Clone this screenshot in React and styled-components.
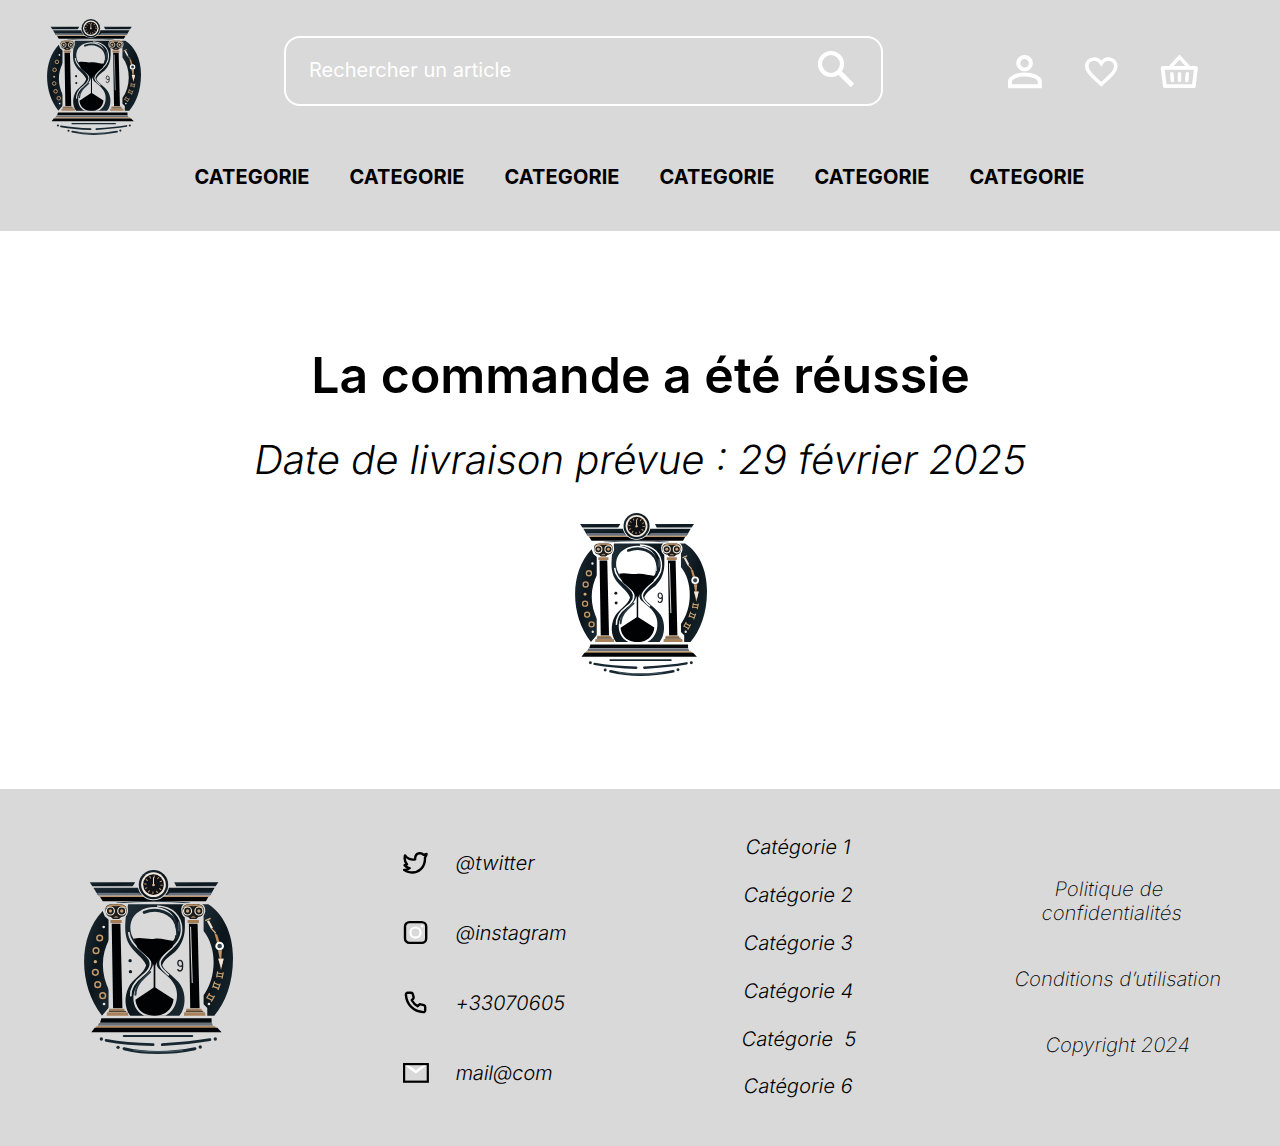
import React from 'react';
import styled, { createGlobalStyle } from 'styled-components';

const GlobalStyle = createGlobalStyle`
  *, *::before, *::after { box-sizing: border-box; }
  body { margin: 0; background: #fff; color: #000; font-family: Inter, 'Liberation Sans', sans-serif; font-optical-sizing: none; }
  h1, p { margin: 0; }
`;

const Page = styled.div`
  min-height: 1146px;
  display: flex;
  flex-direction: column;
`;

const Header = styled.header`
  height: 231px;
  background: #d9d9d9;
`;

const TopBar = styled.div`
  display: flex;
  align-items: flex-start;
  padding: 19px 81px 0 47px;
  height: 136px;
`;

const LogoSvg = styled.svg`
  display: block;
  flex: none;
  width: ${(p) => p.$width}px;
  height: ${(p) => p.$height}px;
`;

const SearchBox = styled.label`
  display: flex;
  align-items: center;
  width: 599px;
  height: 70px;
  margin: 17px 0 0 143px;
  padding: 0 21px 2px 23px;
  border: 2px solid #fff;
  border-radius: 16px;
`;

const SearchInput = styled.input`
  flex: 1;
  min-width: 0;
  padding: 0;
  border: 0;
  outline: 0;
  background: transparent;
  font: 400 20px/24px Inter, 'Liberation Sans', sans-serif;
  color: #fff;
  &::placeholder { color: #fff; opacity: 1; }
`;

const Icon = styled.svg`
  display: block;
  flex: none;
  width: ${(p) => p.$size}px;
  height: ${(p) => p.$size}px;
  fill: none;
`;

const Actions = styled.div`
  display: flex;
  align-items: center;
  gap: 37px;
  margin: 32px 0 0 auto;
`;

const Nav = styled.nav`
  display: flex;
  justify-content: center;
  gap: 40px;
  padding-top: 29px;
`;

const NavLink = styled.a`
  width: 115px;
  font-size: 20px;
  line-height: 24px;
  font-weight: 700;
  letter-spacing: 0.1px;
  text-indent: -0.5px;
  white-space: nowrap;
`;

const Main = styled.main`
  height: 558px;
  display: flex;
  flex-direction: column;
  align-items: center;
  padding: 114px 0 0 1px;
`;

const Title = styled.h1`
  font-size: 50px;
  line-height: 61px;
  font-weight: 600;
  white-space: nowrap;
`;

const Slanted = styled.span`
  display: block;
  font-style: normal;
  letter-spacing: ${(p) => p.$tracking || 0}px;
  white-space: pre;
  transform: translateX(-0.065em) skewX(-9.4deg);
  transform-origin: 0 80%;
`;

const Delivery = styled.p`
  margin: 29px 0 28px;
  font-size: 40px;
  line-height: 50px;
  font-weight: 300;
`;

const Footer = styled.footer`
  height: 357px;
  background: #d9d9d9;
  display: grid;
  grid-template-columns: 403px 256px 280px 341px;
  font-size: 20px;
  line-height: 24px;
  font-weight: 300;
`;

const FooterBrand = styled.div`
  padding: 81px 0 0 84px;
`;

const List = styled.ul`
  display: flex;
  flex-direction: column;
  align-items: ${(p) => p.$align};
  gap: ${(p) => p.$gap}px;
  margin: 0;
  padding: ${(p) => p.$top}px 0 0;
  list-style: none;
`;

const Contact = styled.li`
  display: flex;
  align-items: center;
  gap: 27px;
  height: 26px;
`;

const Legal = styled.div`
  display: flex;
  flex-direction: column;
  align-items: center;
  gap: 42px;
  padding: 88px 0 0 17px;
  font-weight: 200;
`;

const Policy = styled.p`
  display: flex;
  flex-direction: column;
  align-items: center;
  margin-right: 12px;
`;

const Logo = ({ width, height, bg, id }) => (
  <LogoSvg $width={width} $height={height} viewBox="28 29 446 552" preserveAspectRatio="none">
    <defs>
      <linearGradient id={id} x1="0" y1="0" x2="1" y2="1">
        <stop offset="0" stopColor="#202f39" />
        <stop offset=".5" stopColor="#0b151b" />
        <stop offset="1" stopColor="#1b2932" />
      </linearGradient>
    </defs>
    <g fill={`url(#${id})`}>
      <path d="M84 152C10 228 10 374 82 466L96 450L104 440V392C78 340 78 285 104 236V180L90 168Z" />
      <path d="M372 132H400C444 160 474 218 474 293C474 370 451 427 418 466H397V443L386 432V405C426 350 426 262 386 212V168Z" />
      <path d="M160 132H326C330 150 330 180 330 200C330 230 320 255 300 275C285 287 268 297 262 315C270 335 300 348 317 374C334 400 333 443 314 466H166C148 440 149 407 161 382C174 354 206 344 214 315C204 290 178 278 163 252C148 225 151 195 153 170Z" />
      <path d="M45 66H181L174 78H53Z" />
      <path d="M298 66H430L422 78H304Z" />
      <path d="M56 82H419L406 105H70Z" />
    </g>
    <path d="M66 97H192L200 105H71ZM285 97H410L406 105H275Z" fill="#69717f" />
    <path d="M72 106H405L402 110H75Z" fill="#bd986e" />
    <path d="M76 110H400L393 123H84Z" fill="#020305" />
    <path d="M125 128Q240 118 345 128" stroke="#304049" strokeWidth="3" fill="none" />

    <circle cx="236" cy="73" r="47" fill={bg} />
    <circle cx="236" cy="73" r="44" fill={`url(#${id})`} />
    <circle cx="236" cy="73" r="37" fill="#f3e8dc" />
    <circle cx="236" cy="73" r="31" fill="#101114" />
    <circle cx="236" cy="73" r="24" fill="none" stroke="#c8a077" strokeWidth="7" strokeDasharray="3 9.57" />
    <path d="M236 51V74" stroke="#f5dec4" strokeWidth="3" />
    <circle cx="236" cy="74" r="4" fill="#d9b891" />

    <path d="M240 140C279 140 306 168 306 203C306 217 302 230 298 237C288 254 258 275 248 300C243 310 246 319 253 326L275 345C298 365 309 385 306 413C304 441 286 459 272 466H208C185 455 174 433 176 407C179 371 212 350 229 326C237 316 236 303 230 294C217 274 187 254 175 233C166 217 165 200 169 185C177 158 205 140 240 140Z" fill={bg} />
    <path d="M247 137C292 139 321 167 320 209C319 251 279 268 260 296C248 314 261 327 282 345M162 215C165 255 203 267 222 295C234 314 222 332 202 347C180 364 166 383 168 408" fill="none" stroke={bg} strokeWidth="5" />
    <path d="M208 156C252 139 292 160 303 190C307 203 307 216 305 230" fill="none" stroke="#17252e" strokeWidth="9" strokeLinecap="round" />
    <path d="M290 181Q303 201 302 225" fill="none" stroke={bg} strokeWidth="4" />
    <path d="M312 184V213" stroke="#627583" strokeWidth="3" />
    <path d="M177 235C198 229 218 238 240 235C259 233 275 240 297 242L293 260C275 276 251 291 239 320C229 291 200 277 188 262Z" fill="#010203" />
    <path d="M239 300V385" stroke="#05080b" strokeWidth="5" />
    <path d="M239 380L296 417C294 441 278 459 257 464Q239 468 222 464C200 460 184 442 182 418Z" fill="#010203" />
    <path d="M182 403C183 373 201 358 226 335" fill="none" stroke="#263842" strokeWidth="6" strokeLinecap="round" />
    <path d="M252 329Q269 350 286 359" fill="none" stroke={bg} strokeWidth="5" />

    {[124, 355].map((cx) => (
      <g key={cx}>
        <path d={`M${cx - 19} 178H${cx + 19}V445L${cx + 36} 466H${cx - 36}L${cx - 19} 445Z`} fill={bg} stroke={bg} strokeWidth="7" />
        <path d={`M${cx - 34} 146Q${cx - 33} 130 ${cx - 12} 130H${cx + 16}Q${cx + 35} 132 ${cx + 34} 153Q${cx + 31} 171 ${cx + 16} 172L${cx + 10} 178H${cx - 10}L${cx - 16} 172Q${cx - 34} 170 ${cx - 34} 146Z`} fill="#1b1c1b" stroke={bg} strokeWidth="4" />
        <path d={`M${cx - 29} 143Q${cx - 18} 132 ${cx} 135Q${cx + 18} 132 ${cx + 29} 143`} fill="none" stroke="#b58d61" strokeWidth="5" />
        {[-17, 17].map((d) => (
          <g key={d}>
            <circle cx={cx + d} cy="152" r="12" fill="#171c1e" stroke="#f3e8da" strokeWidth="3.5" />
            <circle cx={cx + d} cy="152" r="5" fill="#d0a26f" />
          </g>
        ))}
        <path d={`M${cx - 8} 172Q${cx} 162 ${cx + 8} 172Z`} fill="#a57c54" />
        <path d={`M${cx - 17} 179H${cx + 17}V188H${cx - 17}Z`} fill="#a57c54" />
        <path d={`M${cx - 13} 190H${cx + 13}L${cx + 19} 444H${cx - 9}Z`} fill="#010203" />
        <path d={`M${cx - 21} 445H${cx + 25}V452H${cx - 21}ZM${cx - 27} 456H${cx + 35}L${cx + 37} 466H${cx - 28}Z`} fill="#a9825b" />
        <path d={`M${cx - 22} 453H${cx + 30}`} stroke="#302c27" strokeWidth="3" />
      </g>
    ))}
    <path d="M347 199L352 368" stroke={bg} strokeWidth="3" />

    <g fill="none" stroke="#c69a69" strokeWidth="4.5">
      {[[75, 233], [64, 271], [62, 336], [69, 373], [84, 406]].map(([x, y]) => <circle key={y} cx={x} cy={y} r="8.5" />)}
    </g>
    <circle cx="62" cy="304" r="5" fill="#d2a472" />
    {[[87, 200], [88, 431], [402, 431]].map(([x, y]) => <circle key={`${x}-${y}`} cx={x} cy={y} r="4" fill="#e5e4e2" />)}

    <path d="M399 181L411 204" stroke="#eee2d4" strokeWidth="7" />
    <path d="M391 181L407 174M409 204L422 218" stroke="#d7b58e" strokeWidth="4" />
    <path d="M418 217L427 223L435 250H427Z" fill="#c08a5a" />
    <path d="M429 270H441L439 294H446L438 330L430 294H434Z" fill="#c0946a" />
    <path d="M430 296H446L439 323Z" fill="#f0e5d9" />
    <circle cx="434" cy="257" r="10" fill="#35434b" stroke="#fff" strokeWidth="6" />
    <g stroke="#cda574" strokeWidth="3.5" fill="none">
      <path d="M428 338L444 341M426 347L442 350M428 333L425 351M445 336L441 355" />
      <path d="M418 368L434 375M414 378L430 384M419 363L413 382M436 370L429 389" />
      <path d="M402 403L416 411M397 412L411 420M404 398L395 414M419 406L409 424" />
    </g>

    <circle cx="166" cy="301" r="5" fill="#141b20" />
    <circle cx="167" cy="334" r="5" fill="#141b20" />
    <path d="M323 314Q319 320 313 317Q308 314 309 307Q310 299 316 300Q322 301 323 309V320Q323 331 315 332Q309 332 309 326" fill="none" stroke="#171c20" strokeWidth="4" />

    <path d="M72 470H413L415 493H72Z" fill={bg} />
    <path d="M80 474H410V487H76Z" fill="#05090c" />
    <path d="M73 488H411L414 496H69Z" fill="#6b717a" />
    <path d="M66 497H419L424 503H62Z" fill="#b38c61" />
    <path d="M60 502H427L440 516H50Z" fill="#020507" />

    <g fill="none" stroke="#172832" strokeWidth="6" strokeLinecap="round">
      <path d="M147 527H352" />
      <path d="M94 540Q155 551 235 553M262 553Q345 548 405 538" strokeWidth="8" />
      <path d="M148 565Q244 588 360 565" strokeWidth="9" />
    </g>
    <path d="M175 569Q244 580 324 570" stroke="#667883" strokeWidth="2" fill="none" />
    {[[80, 536], [421, 536], [130, 561], [376, 560]].map(([x, y]) => <circle key={x} cx={x} cy={y} r="5" fill="#1d2a32" />)}
  </LogoSvg>
);

const SearchIcon = () => (
  <Icon $size={46} viewBox="0 0 46 46" stroke="#fff">
    <circle cx="17" cy="17" r="11" strokeWidth="4.2" />
    <path d="M25 25L38.5 38.5" strokeWidth="5" />
  </Icon>
);

const UserIcon = () => (
  <Icon $size={40} viewBox="0 0 40 40" stroke="#fff" strokeWidth="4">
    <circle cx="19.6" cy="12.2" r="6.3" />
    <path d="M5 35.3V30.8C5 25.7 13.2 23.6 20 23.6S34.8 25.7 34.8 30.8V35.3Z" />
  </Icon>
);

const HeartIcon = () => (
  <Icon $size={40} viewBox="0 0 40 40" stroke="#fff" strokeWidth="3.6">
    <path d="M19.3 33.3L16.8 31C8.7 23.6 4.8 20 4.8 15.2C4.8 11 8 8 12 8C14.7 8 17.6 9.6 19.3 12.4C21 9.6 23.9 8 26.6 8C30.6 8 33.8 11 33.8 15.2C33.8 20 29.9 23.6 21.8 31Z" />
  </Icon>
);

const BasketIcon = () => (
  <Icon $size={40} viewBox="0 0 40 40" stroke="#fff" strokeWidth="3.8" strokeLinejoin="round" strokeLinecap="round">
    <path d="M3.6 16.8H37L34.8 35.2H5.9Z" />
    <path d="M12.3 15L20.5 6L28.8 15" strokeLinejoin="miter" strokeWidth="3.4" />
    <path d="M12.9 22.8L13.4 29.6M20.5 22.8V29.6M28.3 22.8L27.7 29.6" strokeWidth="3.5" />
  </Icon>
);

const contacts = [
  ['@twitter', 0.32, <path key="i" d="M2.2 4.8C4 8 8.5 9.6 12.3 8.8C12.2 5 13.5 2.8 16.8 2.6C18.8 2.5 20 3.3 20.8 4.3L23.8 3.3C23.6 5.2 23 6 22.2 7C22.6 17 15.5 22.8 7.5 21.8C5 21.5 3 20.8 1.2 19.3C3.5 19.6 5.3 18.8 6.8 17.5C4.8 17.2 3 16.3 1.8 14.6L4.2 13.8C2 11.5 1.5 8 2.2 4.8Z" transform="translate(-.2 .6)" strokeWidth="2.4" strokeLinejoin="round" />],
  ['@instagram', 0, <React.Fragment key="i"><rect x="2" y="2.1" width="21.2" height="20.8" rx="4.5" strokeWidth="2.4" /><g stroke="#fff"><circle cx="12.5" cy="12.6" r="5.1" strokeWidth="2.2" /><path d="M18 6.2H20.2" strokeWidth="2.2" /></g></React.Fragment>],
  ['+33070605', 0.12, <path key="i" d="M4.2 2.8H7.7C8.5 2.8 9.1 3.3 9.3 4.1L10.1 7.1C10.3 7.8 10.1 8.4 9.6 8.9L8.3 10.2C9.7 12.8 11.6 14.8 14.2 16.2L15.5 14.9C16 14.4 16.7 14.2 17.3 14.4L20.3 15.2C21.2 15.5 21.7 16.1 21.7 17V20.2C21.7 21.3 20.8 22.2 19.7 22.1C10 21.4 3.2 14.7 2.4 4.8C2.3 3.7 3.1 2.8 4.2 2.8Z" transform="translate(.5 0)" strokeWidth="2.4" strokeLinejoin="round" />],
  ['mail@com', -0.12, <React.Fragment key="i"><path d="M2.5 4.2L12.8 12L23.2 4.2" stroke="#fff" strokeWidth="2.5" /><rect x="1.1" y="4.1" width="23.7" height="17.6" strokeWidth="2.2" /></React.Fragment>],
];

const categories = ['Catégorie 1', 'Catégorie 2', 'Catégorie 3', 'Catégorie 4', 'Catégorie  5', 'Catégorie 6'];

export default function App() {
  return (
    <Page>
      <GlobalStyle />
      <Header>
        <TopBar>
          <Logo id="logo-header" width={94} height={116} bg="#d9d9d9" />
          <SearchBox>
            <SearchInput placeholder="Rechercher un article" />
            <SearchIcon />
          </SearchBox>
          <Actions>
            <UserIcon />
            <HeartIcon />
            <BasketIcon />
          </Actions>
        </TopBar>
        <Nav>
          {categories.map((c) => <NavLink key={c}>CATEGORIE</NavLink>)}
        </Nav>
      </Header>
      <Main>
        <Title>La commande a été réussie</Title>
        <Delivery><Slanted>Date de livraison prévue : 29 février 2025</Slanted></Delivery>
        <Logo id="logo-main" width={132} height={163} bg="#fff" />
      </Main>
      <Footer>
        <FooterBrand>
          <Logo id="logo-footer" width={149} height={184} bg="#d9d9d9" />
        </FooterBrand>
        <List $align="stretch" $gap={44} $top={61}>
          {contacts.map(([label, tracking, drawing]) => (
            <Contact key={label}>
              <Icon $size={26} viewBox="0 0 26 26" stroke="#000">{drawing}</Icon>
              <Slanted $tracking={tracking}>{label}</Slanted>
            </Contact>
          ))}
        </List>
        <List $align="center" $gap={23.9} $top={46}>
          {categories.map((c) => <li key={c}><Slanted $tracking={0.1}>{c}</Slanted></li>)}
        </List>
        <Legal>
          <Policy>
            <Slanted $tracking={0.15}>Politique de </Slanted>
            <Slanted $tracking={0.22}>confidentialités</Slanted>
          </Policy>
          <p><Slanted $tracking={0.13}>Conditions d’utilisation</Slanted></p>
          <p><Slanted $tracking={0.06}>Copyright 2024</Slanted></p>
        </Legal>
      </Footer>
    </Page>
  );
}
